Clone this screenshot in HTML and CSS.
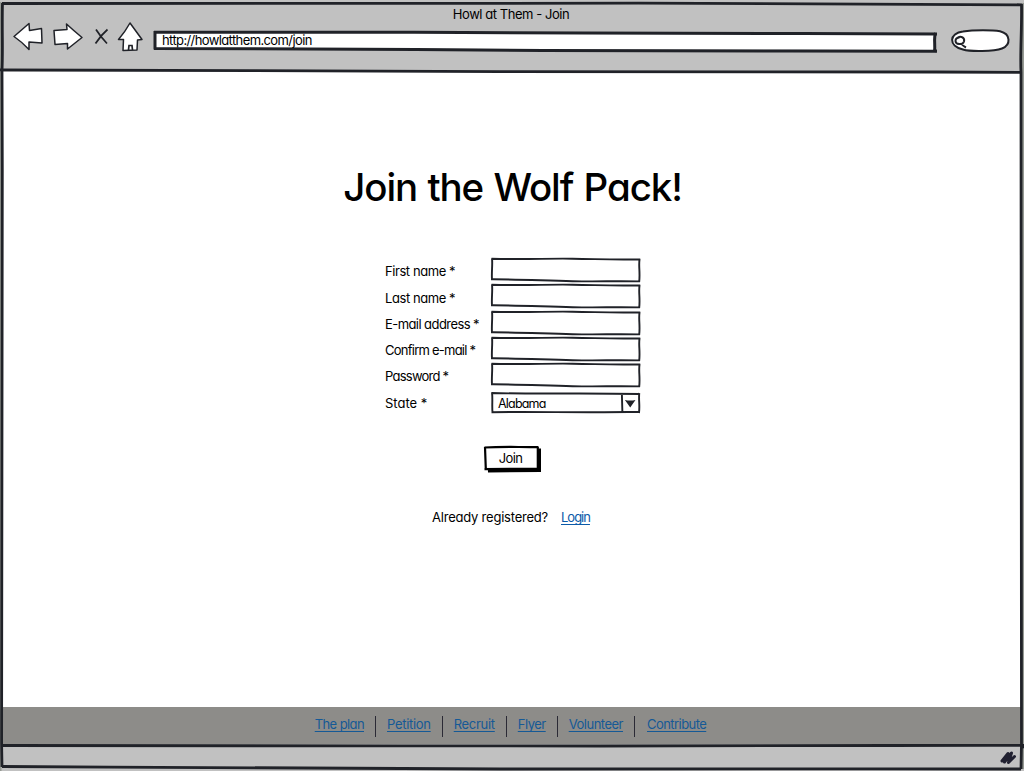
FILE: index.html
```html
<!DOCTYPE html>
<html lang="en">
<head>
<meta charset="utf-8">
<title>Howl at Them - Join</title>
<link rel="stylesheet" href="styles.css">
</head>
<body>
<svg class="defs" aria-hidden="true">
  <symbol id="box" viewBox="0 0 150 26" preserveAspectRatio="none">
    <path class="paper" d="M2 2.5L148 3.5V24L2 22.5Z"/>
    <path class="ink" d="M1.5 1.8C40 2.6 55 1.3 82 1.7S120 3 149.3 2.4M2 1.5C2.7 8 1.4 15 2 23.3M1.2 22.3C30 22.2 52 23.6 82 24.2S120 23.8 149 24.4M148.6 2C147.4 9 149.3 15 148.2 24.8"/>
  </symbol>
</svg>
<div class="window">
  <header class="chrome">
    <div class="title">Howl at Them - Join</div>
    <div class="toolbar">
      <svg class="tools" viewBox="0 0 140 36" aria-hidden="true">
        <path class="glyph" d="M2 16.5L17 3.5L17.5 10.5L29.5 8.5L30 23L17 22V29.5Q10 22 2 16.5Z"/>
        <path class="glyph" d="M42 10.5L55 9.5L54.5 4Q61 10 70 17.5L55.5 29V23.5L43 24.5Z"/>
        <path class="cross" d="M84 9.5Q88 16 95 23.5M95.5 9.5Q89 15 83.5 23.5"/>
        <path class="glyph" d="M118 3L130 19.5L125.5 20L125 30L111 30.5L111.5 19.5H106.5Q113 12 118 3Z"/>
        <path class="cross" d="M116.5 30L117 25.5H120L120.5 30"/>
      </svg>
      <div class="address">
        <svg class="sketch" viewBox="0 0 784 24" preserveAspectRatio="none" aria-hidden="true">
          <path class="paper" d="M2 3L782 4V21L2 19Z"/>
          <path class="ink heavy" d="M1 3.3C170 3 280 3.2 430 4T650 4.5T783 5M1 19.5C150 20 260 20 390 21.5T640 22T782 22M2 2V20.5"/>
          <path class="ink heavy" d="M782.5 4C780.5 10 782.5 15 781.5 23"/>
        </svg>
        <span class="url">http://howlatthem.com/join</span>
      </div>
      <svg class="search" viewBox="0 0 60 24" aria-hidden="true">
        <path class="glyph pill" d="M13 2.5C24 .8 43 1 50 2.3C61 5 61 16 52 19.5C44 22.5 20 22.7 13 20.5C-2 17 -1 4 13 2.5Z"/>
        <path class="lens" d="M8 8.5C11 6.5 15 9 14 12.5C12.5 16.5 5.5 15.5 5.5 12C5.5 10 6.5 8.5 9.5 8.5M11 14.5Q13 17 16 18.5"/>
      </svg>
    </div>
  </header>

  <main class="page">
    <h1>Join the Wolf Pack!</h1>
    <form class="form">
      <label for="first" class="l-first">First name *</label>
      <div class="field"><svg class="sketch"><use href="#box"/></svg><input id="first" type="text"></div>
      <label for="last" class="l-last">Last name *</label>
      <div class="field"><svg class="sketch"><use href="#box"/></svg><input id="last" type="text"></div>
      <label for="email" class="l-email">E-mail address *</label>
      <div class="field"><svg class="sketch"><use href="#box"/></svg><input id="email" type="text"></div>
      <label for="confirm" class="l-confirm">Confirm e-mail *</label>
      <div class="field"><svg class="sketch"><use href="#box"/></svg><input id="confirm" type="text"></div>
      <label for="password" class="l-password">Password *</label>
      <div class="field"><svg class="sketch"><use href="#box"/></svg><input id="password" type="password"></div>
      <span class="l-state">State *</span>
      <div class="field select">
        <svg class="sketch" viewBox="0 0 150 26" preserveAspectRatio="none" aria-hidden="true">
          <path class="ink" d="M1.5 4C50 5.3 90 3.7 148.5 5M2 3.5C2.8 10 1.8 17 2.5 23.5M1.5 23.2C50 22.3 90 24.2 148.5 22.8M148.3 4C147.5 10 149 17 148 24M131 4.5L131.5 23"/>
          <path class="arrow" d="M134 11Q139.500 12 144.500 11L139.300 18.500Z"/>
        </svg>
        <span class="value">Alabama</span>
      </div>
    </form>
    <button class="join" type="button">
      <svg class="sketch" viewBox="0 0 60 28" aria-hidden="true">
        <path class="shadow" d="M4 4L58 3.5V27L5 27.5Z"/>
        <path class="paper" d="M2 2L54 2V23.5L2 24Z"/>
        <path class="ink bold" d="M1.5 2.5C20 1.5 35 2.2 55 2M2 2L2.8 24M1.5 24.2L55 23.5M54.8 1.5V24.5"/>
      </svg>
      <span>Join</span>
    </button>
    <p class="login"><span>Already registered?</span><a href="#">Login</a></p>
  </main>

  <nav class="links">
    <a class="n-plan" href="#">The plan</a>
    <a class="n-petition" href="#">Petition</a>
    <a class="n-recruit" href="#">Recruit</a>
    <a class="n-flyer" href="#">Flyer</a>
    <a class="n-volunteer" href="#">Volunteer</a>
    <a class="n-contribute" href="#">Contribute</a>
  </nav>
  <footer class="status"></footer>

  <svg class="frame" viewBox="0 0 1024 771" aria-hidden="true">
    <path class="fringe" d="M.5 2V771M1023 3V769"/>
    <path class="ink edge" d="M2 3.5C160 2.5 330 4 500 3.3S820 4.2 1022 4.8M0 69.800C180 70 320 71.3 500 71.7S850 71.5 1022 72.3"/>
    <path class="ink edge" d="M2.5 3C1.8 28 3 50 2 70L2.3 170C1.3 350 2.5 560 1.6 744L2 767M1021.5 4C1022 30 1020 52 1021 72C1022.5 270 1020.5 500 1021.5 744L1021 769"/>
    <path class="ink edge" d="M2 745.5C220 744.8 400 746.5 600 746T890 745.5T1021 747M2 766.5C160 767 300 769 500 769S850 768.5 1021 769"/>
    <path class="grip" d="M1002 761L1008 753.5L1004.5 762L1011.5 753L1008.5 762.5L1014.5 756.5"/>
  </svg>
</div>
</body>
</html>
```

FILE: styles.css
```css
* {
  box-sizing: border-box;
}

body {
  margin: 0;
  background: #fff;
  color: #000;
  font-family: Inter, "Liberation Sans", sans-serif;
  font-feature-settings: "cv11" 1;
  font-size: 13px;
  line-height: 16px;
}

.defs {
  position: absolute;
  width: 0;
  height: 0;
}

.window {
  position: relative;
  display: flex;
  flex-direction: column;
  width: 1024px;
  height: 771px;
  overflow: hidden;
}

.ink {
  fill: none;
  stroke: #202228;
  stroke-width: 1.9;
}

.heavy {
  stroke-width: 3;
}

.edge {
  stroke-width: 2.8;
}

.bold {
  stroke: #000;
  stroke-width: 2.2;
}

.paper {
  fill: #fff;
}

.sketch {
  position: absolute;
  inset: 0;
  width: 100%;
  height: 100%;
}

.frame {
  position: absolute;
  inset: 0;
  width: 1024px;
  height: 771px;
  pointer-events: none;
}

.fringe {
  fill: none;
  stroke: #969a94;
  stroke-width: 2;
}

.grip {
  fill: none;
  stroke: #202030;
  stroke-width: 3;
  stroke-linejoin: round;
  stroke-linecap: round;
}

.chrome {
  height: 72px;
  padding-top: 6px;
  background: #c1c1c1;
}

.title {
  padding-right: 2px;
  text-align: center;
  letter-spacing: -0.45px;
}

.toolbar {
  display: flex;
  align-items: flex-start;
  padding-left: 12px;
}

.tools {
  width: 140px;
  height: 36px;
  margin-top: -2px;
}

.glyph {
  fill: #fff;
  stroke: #202228;
  stroke-width: 1.5;
  stroke-linejoin: round;
}

.pill {
  stroke-width: 2;
}

.cross {
  fill: none;
  stroke: #202228;
  stroke-width: 1.7;
}

.lens {
  fill: none;
  stroke: #202228;
  stroke-width: 2;
}

.address {
  position: relative;
  width: 784px;
  height: 24px;
  margin: 7px 0 0 1px;
  padding: 3px 0 0 9px;
}

.url {
  position: relative;
  letter-spacing: -0.61px;
}

.search {
  width: 60px;
  height: 24px;
  margin: 7px 0 0 13px;
}

.page {
  flex: 1;
  display: flex;
  flex-direction: column;
  align-items: center;
}

h1 {
  margin: 91px 0 0 1px;
  font-size: 38.5px;
  font-weight: 500;
  line-height: 48px;
  letter-spacing: -1.1px;
  word-spacing: 1.2px;
  white-space: nowrap;
}

.form {
  display: grid;
  grid-template-columns: 105.5px 150.5px;
  grid-auto-rows: 26.3px;
  margin: 46px 0 0 2px;
  align-items: start;
}

.form > label,
.form > .l-state {
  padding-top: 6px;
  white-space: nowrap;
}

.l-first,
.l-last {
  letter-spacing: -0.43px;
}

.form > .l-last,
.form > .l-state {
  padding-top: 7px;
}

.l-email {
  letter-spacing: -0.57px;
}

.l-confirm,
.l-password {
  letter-spacing: -0.76px;
}

.field {
  position: relative;
  height: 26px;
  margin-left: -0.5px;
}

.field input {
  position: relative;
  width: 144px;
  height: 18px;
  margin: 4px 3px;
  padding: 0 4px;
  border: 0;
  outline: 0;
  background: transparent;
  font: inherit;
}

.select {
  padding: 7px 0 0 8px;
}

.select .sketch {
  top: 1px;
  height: 26px;
}

.value {
  position: relative;
  font-size: 12.5px;
  letter-spacing: -0.8px;
}

.arrow {
  fill: #202228;
}

.join {
  position: relative;
  width: 60px;
  height: 28px;
  margin: 30px 0 0 1px;
  padding: 0 4px 1px 0;
  border: 0;
  background: transparent;
  color: #000;
  font: inherit;
  font-feature-settings: inherit;
  letter-spacing: -0.6px;
}

.join span {
  position: relative;
}

.shadow {
  fill: #000;
}

.login {
  display: flex;
  gap: 13px;
  margin: 36px 2px 0 0;
  letter-spacing: -0.22px;
}

.login a {
  letter-spacing: -1px;
}

a {
  color: #0b5aa8;
  text-decoration: underline;
  text-underline-offset: 2px;
  text-decoration-skip-ink: none;
}

.links {
  display: flex;
  justify-content: center;
  height: 37px;
  padding: 9px 3px 0 0;
  background: #8d8c89;
}

.links a {
  height: 21px;
  color: #155996;
  white-space: nowrap;
}

.links a + a {
  margin-left: 11px;
  padding-left: 11px;
  border-left: 1.5px solid #2b2a35;
}

.links .n-plan {
  letter-spacing: -0.6px;
}

.links .n-petition,
.links .n-recruit {
  letter-spacing: -0.3px;
}

.links .n-flyer,
.links .n-volunteer {
  letter-spacing: -0.5px;
}

.links .n-contribute {
  padding-left: 12px;
  letter-spacing: -0.56px;
}

.status {
  height: 27px;
  background: #c1c1c1;
}
```
